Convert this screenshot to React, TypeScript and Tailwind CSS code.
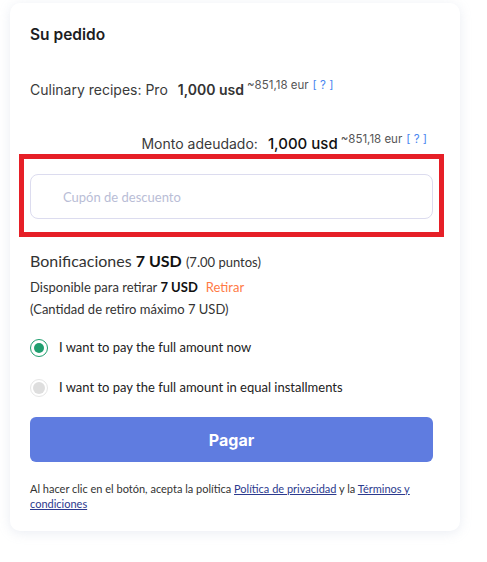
import React from "react";

const inter = { fontFamily: "Inter, 'Noto Sans', sans-serif" };
const lato = { fontFamily: "Lato, 'Noto Sans', sans-serif" };

const Price = ({ big = false }: { big?: boolean }) => (
  <span className="inline-flex items-start">
    <span
      className={
        big
          ? "text-[15px] font-medium text-[#111] leading-[20px]"
          : "text-[14px] font-semibold text-[#333] leading-[20px]"
      }
    >
      1,000 usd
    </span>
    <span className="ml-[3px] -mt-[3px] text-[11.5px] leading-[16px] text-[#555]">~851,18 eur</span>
    <span className="ml-[4px] -mt-[3px] text-[11.5px] leading-[16px] text-[#4a86f0]">[ ? ]</span>
  </span>
);

const Radio = ({ checked, label }: { checked: boolean; label: string }) => (
  <label className="flex items-center h-[20px] gap-[11px]">
    <span
      className={`flex items-center justify-center w-[18px] h-[18px] rounded-full border-[1.5px] ${
        checked ? "border-[#1f9e6e]" : "border-[#e6e6e6]"
      }`}
    >
      <span
        className={`rounded-full ${checked ? "w-[10px] h-[10px] bg-[#1f9e6e]" : "w-[12px] h-[12px] bg-[#dedede]"}`}
      />
    </span>
    <span className="text-[13px] text-[#222]">{label}</span>
  </label>
);

export default function App() {
  return (
    <div className="min-h-[562px] bg-white pt-[3px] pl-[10px]">
      <div className="w-[450px] rounded-[10px] bg-white shadow-[0_2px_12px_rgba(160,175,200,0.22)] pl-[20px] pr-[27px] pt-[22px] pb-[20px]">
        <div style={inter}>
          <h2 className="text-[15.5px] font-semibold leading-[20px] text-[#1d1d1f]">Su pedido</h2>

          <div className="mt-[35px] flex items-start h-[20px] text-[14px] leading-[20px] text-[#3a3a3a]">
            <span>Culinary recipes: Pro</span>
            <span className="ml-[10px]">
              <Price />
            </span>
          </div>

          <div className="mt-[33px] flex justify-end pr-[6px] items-start h-[20px] text-[14px] leading-[20px] text-[#3a3a3a]">
            <span className="mt-[1px]">Monto adeudado:</span>
            <span className="ml-[10px] mt-[1px]">
              <Price big />
            </span>
          </div>
        </div>

        {/* Coupon */}
        <div className="-mx-[11px] mt-[1px] border-[5px] border-[#e61f27] px-[6px] pt-[15px] pb-[13px]">
          <input
            placeholder="Cupón de descuento"
            className="w-full h-[45px] rounded-[8px] border border-[#dcdcef] bg-white pl-[32px] text-[13px] text-[#333] placeholder:text-[#b9bdd6] outline-none"
            style={lato}
          />
        </div>

        <div style={lato} className="text-[#333]">
          <div className="mt-[14px] leading-[20px] text-[16px]">
            Bonificaciones <span className="font-bold text-[#111]">7 USD</span>{" "}
            <span className="text-[13px]">(7.00 puntos)</span>
          </div>
          <div className="mt-[6px] leading-[18px] text-[13px]">
            Disponible para retirar <span className="font-bold text-[#111]">7 USD</span>
            <span className="ml-[8px] text-[#ff7a45]">Retirar</span>
          </div>
          <div className="mt-[4px] leading-[18px] text-[13px]">(Cantidad de retiro máximo 7 USD)</div>

          <div className="mt-[20px] flex flex-col gap-[20px]">
            <Radio checked label="I want to pay the full amount now" />
            <Radio checked={false} label="I want to pay the full amount in equal installments" />
          </div>

          <button
            style={inter}
            className="mt-[19px] w-full h-[45px] rounded-[6px] bg-[#5f7ce0] text-white text-[16px] font-bold"
          >
            Pagar
          </button>

          <p className="mt-[20px] text-[11px] leading-[14.5px] text-[#333]">
            Al hacer clic en el botón, acepta la política{" "}
            <a className="underline text-[#2c3a8e]">Política de privacidad</a> y la{" "}
            <a className="underline text-[#2c3a8e]">Términos y</a>
            <br />
            <a className="underline text-[#2c3a8e]">condiciones</a>
          </p>
        </div>
      </div>
    </div>
  );
}
